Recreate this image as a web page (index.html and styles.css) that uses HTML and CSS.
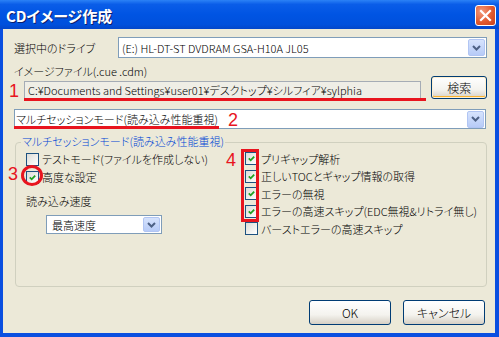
FILE: index.html
```html
<!DOCTYPE html>
<html lang="ja">
<head>
<meta charset="utf-8">
<title>CDイメージ作成</title>
<link rel="stylesheet" href="styles.css">
</head>
<body>
<div class="window">
  <div class="titlebar">
    <span class="title">CDイメージ作成</span>
    <span class="close">
      <svg width="13" height="13" viewBox="0 0 13 13"><path d="M2 2 L11 11 M11 2 L2 11" stroke="#fff" stroke-width="2.2" stroke-linecap="square"/></svg>
    </span>
  </div>
  <div class="client">
    <div class="row drive-row">
      <span class="label drive-label">選択中のドライブ</span>
      <div class="combo drive-combo">
        <span class="combo-text">(E:) HL-DT-ST DVDRAM GSA-H10A JL05</span>
        <span class="arrow"><svg width="9" height="6" viewBox="0 0 9 6"><path d="M1 1 L4.5 4.5 L8 1" fill="none" stroke="#4D6185" stroke-width="2"/></svg></span>
      </div>
    </div>
    <div class="label file-label">イメージファイル(.cue .cdm)</div>
    <div class="row file-row">
      <span class="mark mark-1">1</span>
      <div class="textbox">C:¥Documents and Settings¥user01¥デスクトップ¥シルフィア¥sylphia</div>
      <span class="underline underline-1"></span>
      <button class="btn search-btn">検索</button>
    </div>
    <div class="row mode-row">
      <div class="combo mode-combo">
        <span class="combo-text">マルチセッションモード(読み込み性能重視)</span>
        <span class="arrow"><svg width="9" height="6" viewBox="0 0 9 6"><path d="M1 1 L4.5 4.5 L8 1" fill="none" stroke="#4D6185" stroke-width="2"/></svg></span>
      </div>
      <span class="underline underline-2"></span>
      <span class="mark mark-2">2</span>
    </div>
    <div class="group">
      <div class="legend">マルチセッションモード(読み込み性能重視)</div>
      <div class="group-body">
        <div class="col left-col">
          <div class="check-row"><span class="box"></span><span>テストモード(ファイルを作成しない)</span></div>
          <div class="check-row"><span class="box checked"><svg width="7" height="7" viewBox="0 0 7 7"><path d="M0.8 3.4 L2.7 5.3 L6.2 1.6" fill="none" stroke="#21A121" stroke-width="1.8"/></svg></span><span>高度な設定</span></div>
          <div class="label speed-label">読み込み速度</div>
          <div class="combo speed-combo">
            <span class="combo-text">最高速度</span>
            <span class="arrow"><svg width="9" height="6" viewBox="0 0 9 6"><path d="M1 1 L4.5 4.5 L8 1" fill="none" stroke="#4D6185" stroke-width="2"/></svg></span>
          </div>
        </div>
        <div class="col right-col">
          <div class="check-row"><span class="box checked"><svg width="7" height="7" viewBox="0 0 7 7"><path d="M0.8 3.4 L2.7 5.3 L6.2 1.6" fill="none" stroke="#21A121" stroke-width="1.8"/></svg></span><span>プリギャップ解析</span></div>
          <div class="check-row"><span class="box checked"><svg width="7" height="7" viewBox="0 0 7 7"><path d="M0.8 3.4 L2.7 5.3 L6.2 1.6" fill="none" stroke="#21A121" stroke-width="1.8"/></svg></span><span>正しいTOCとギャップ情報の取得</span></div>
          <div class="check-row"><span class="box checked"><svg width="7" height="7" viewBox="0 0 7 7"><path d="M0.8 3.4 L2.7 5.3 L6.2 1.6" fill="none" stroke="#21A121" stroke-width="1.8"/></svg></span><span>エラーの無視</span></div>
          <div class="check-row"><span class="box checked"><svg width="7" height="7" viewBox="0 0 7 7"><path d="M0.8 3.4 L2.7 5.3 L6.2 1.6" fill="none" stroke="#21A121" stroke-width="1.8"/></svg></span><span>エラーの高速スキップ(EDC無視&amp;リトライ無し)</span></div>
          <div class="check-row"><span class="box"></span><span>バーストエラーの高速スキップ</span></div>
        </div>
      </div>
      <span class="mark mark-3">3</span>
      <span class="circle"></span>
      <span class="mark mark-4">4</span>
      <span class="rect"></span>
    </div>
    <div class="buttons">
      <button class="btn dlg-btn">OK</button>
      <button class="btn dlg-btn">キャンセル</button>
    </div>
  </div>
</div>
</body>
</html>
```
FILE: styles.css
```css
* { box-sizing: border-box; }
html, body { margin: 0; padding: 0; }
body {
  width: 499px;
  height: 337px;
  overflow: hidden;
  font-family: "Noto Sans CJK JP", "Noto Sans", sans-serif;
  font-size: 11px;
  font-weight: 300;
  font-feature-settings: "palt";
  color: #000;
}
.window {
  width: 499px;
  height: 337px;
  background: #0A4FE0;
  display: flex;
  flex-direction: column;
}
.titlebar {
  height: 29px;
  display: flex;
  align-items: center;
  justify-content: space-between;
  padding: 0 3px 0 6px;
  background: linear-gradient(#2B82F6 0%, #0A5DE8 15%, #0054E3 50%, #0050DC 85%, #0346C9 100%);
}
.title {
  color: #fff;
  font-weight: bold;
  font-size: 15px;
  text-shadow: 1px 1px 0 #0A1E6E;
  line-height: 16px;
  margin-top: 2px;
}
.close {
  width: 21px;
  height: 21px;
  border: 1px solid #fff;
  border-radius: 3px;
  background: radial-gradient(circle at 30% 30%, #F29A7C, #E15A30 55%, #C8401A);
  display: flex;
  align-items: center;
  justify-content: center;
  margin-top: 2px;
}
.client {
  flex: 1;
  margin: 0 4px 4px 3px;
  background: #ECE9D8;
  padding: 8px 8px 0 11px;
}
.row { display: flex; position: relative; }
.label { line-height: 14px; }
.drive-row { height: 21px; align-items: center; }
.drive-label { width: 104px; }
.combo {
  display: flex;
  align-items: center;
  background: #fff;
  border: 1px solid #7F9DB9;
  padding: 0 1px 0 3px;
}
.combo-text { flex: 1; white-space: nowrap; overflow: hidden; }
.arrow {
  width: 17px;
  height: 17px;
  border-radius: 2px;
  background: linear-gradient(#D6E3FD, #B7CBF7);
  border: 1px solid #B1C5F3;
  display: flex;
  align-items: center;
  justify-content: center;
}
.drive-combo { width: 369px; height: 21px; }
.file-label { margin-top: 6px; }
.file-row { height: 24px; align-items: flex-end; margin-top: -2px; }
.textbox {
  margin-left: 10px;
  width: 400px;
  height: 19px;
  border: 1px solid #A5ACB5;
  background: #EFEEE6;
  padding: 0 3px;
  line-height: 17px;
  white-space: nowrap;
  overflow: hidden;
}
.btn {
  font-family: inherit;
  font-size: 12px;
  font-weight: 300;
  font-feature-settings: "palt";
  background: linear-gradient(#FFFFFF, #F4F3EE 60%, #D6D0C5);
  border: 1px solid #003C74;
  border-radius: 3px;
  color: #000;
  padding: 0;
}
.search-btn {
  margin-left: 10px;
  width: 56px;
  height: 23px;
  align-self: flex-start;
  box-shadow: inset 0 0 0 1px #FFF0CF, inset 0 -1px 0 1px #F8B330;
}
.mode-row { margin-top: 9px; }
.mode-combo { width: 472px; height: 20px; padding-left: 1px; }
.group {
  position: relative;
  margin: 13px 0 0 1px;
  width: 472px;
  height: 145px;
  border: 1px solid #D0D0BF;
  border-radius: 4px;
}
.legend {
  display: table;
  margin: -9px 0 0 5px;
  padding: 0 1px;
  background: #ECE9D8;
  color: #0046D5;
  line-height: 14px;
}
.group-body { display: flex; margin-top: 2px; }
.col { display: flex; flex-direction: column; }
.left-col { width: 229px; padding-left: 10px; }
.check-row {
  height: 18px;
  display: flex;
  align-items: center;
  white-space: nowrap;
}
.right-col .check-row { height: 17.5px; }
.box {
  width: 13px;
  height: 13px;
  border: 1px solid #1C5180;
  background: linear-gradient(135deg, #DCDCD7, #FFFFFF);
  margin-right: 3px;
  display: flex;
  align-items: center;
  justify-content: center;
  flex: none;
}
.speed-label { margin-top: 8px; }
.speed-combo { margin: 7px 0 0 20px; width: 116px; height: 19px; padding-left: 5px; }
.speed-combo .arrow { height: 15px; }
.buttons {
  display: flex;
  justify-content: flex-end;
  gap: 12px;
  margin: 13px 2px 0 0;
}
.dlg-btn { width: 82px; height: 25px; }
.mark {
  position: absolute;
  color: #E8141E;
  font-family: "Liberation Sans", sans-serif;
  font-size: 18px;
  line-height: 18px;
}
.mark-1 { left: -5px; top: 6px; }
.mark-2 { left: 214px; top: 2px; }
.mark-3 { left: -8px; top: 22px; }
.mark-4 { left: 210px; top: 8px; }
.underline { position: absolute; background: #E8141E; height: 3px; }
.underline-1 { left: 10px; width: 402px; bottom: -1px; }
.underline-2 { left: 0; width: 205px; top: 17px; }
.circle {
  position: absolute;
  left: 5px;
  top: 22px;
  width: 22px;
  height: 21px;
  border: 3px solid #E8141E;
  border-radius: 50%;
}
.rect {
  position: absolute;
  left: 225px;
  top: 6px;
  width: 18px;
  height: 73px;
  border: 3px solid #E8141E;
}
```
